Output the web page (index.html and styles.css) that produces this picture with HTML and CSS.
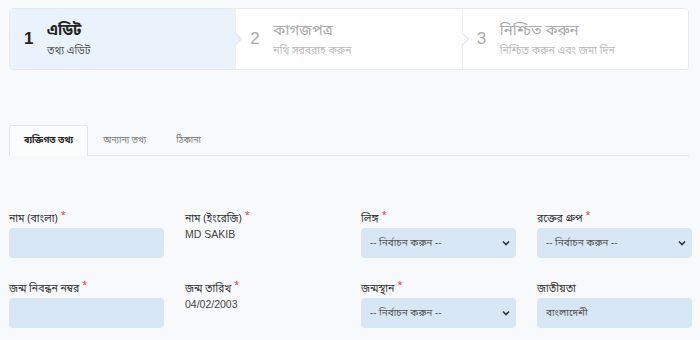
FILE: index.html
```html
<!DOCTYPE html>
<html lang="bn">
<head>
<meta charset="utf-8">
<link rel="stylesheet" href="styles.css">
</head>
<body>
<div class="steps">
  <div class="step active">
    <span class="num">1</span>
    <div class="stext"><div class="stitle">এডিট</div><div class="ssub">তথ্য এডিট</div></div>
  </div>
  <div class="step">
    <span class="num">2</span>
    <div class="stext"><div class="stitle">কাগজপত্র</div><div class="ssub">নথি সরবরাহ করুন</div></div>
  </div>
  <div class="step last">
    <span class="num">3</span>
    <div class="stext"><div class="stitle">নিশ্চিত করুন</div><div class="ssub">নিশ্চিত করুন এবং জমা দিন</div></div>
  </div>
</div>

<div class="tabs">
  <div class="tab active">ব্যক্তিগত তথ্য</div>
  <div class="tab">অন্যান্য তথ্য</div>
  <div class="tab">ঠিকানা</div>
</div>

<div class="form">
  <div class="field">
    <div class="label">নাম (বাংলা)<span class="req">*</span></div>
    <div class="input"></div>
  </div>
  <div class="field">
    <div class="label">নাম (ইংরেজি)<span class="req">*</span></div>
    <div class="plain">MD SAKIB</div>
  </div>
  <div class="field">
    <div class="label">লিঙ্গ<span class="req">*</span></div>
    <div class="input select"><span>-- নির্বাচন করুন --</span><svg width="8" height="6" viewBox="0 0 8 6"><path d="M1 1.5 L4 4.5 L7 1.5" fill="none" stroke="#333" stroke-width="1.6"/></svg></div>
  </div>
  <div class="field">
    <div class="label">রক্তের গ্রুপ<span class="req">*</span></div>
    <div class="input select"><span>-- নির্বাচন করুন --</span><svg width="8" height="6" viewBox="0 0 8 6"><path d="M1 1.5 L4 4.5 L7 1.5" fill="none" stroke="#333" stroke-width="1.6"/></svg></div>
  </div>
  <div class="field">
    <div class="label">জন্ম নিবন্ধন নম্বর<span class="req">*</span></div>
    <div class="input"></div>
  </div>
  <div class="field">
    <div class="label">জন্ম তারিখ<span class="req">*</span></div>
    <div class="plain">04/02/2003</div>
  </div>
  <div class="field">
    <div class="label">জন্মস্থান<span class="req">*</span></div>
    <div class="input select"><span>-- নির্বাচন করুন --</span><svg width="8" height="6" viewBox="0 0 8 6"><path d="M1 1.5 L4 4.5 L7 1.5" fill="none" stroke="#333" stroke-width="1.6"/></svg></div>
  </div>
  <div class="field">
    <div class="label">জাতীয়তা</div>
    <div class="input text">বাংলাদেশী</div>
  </div>
</div>
</body>
</html>
```
FILE: styles.css
```css
* { box-sizing: border-box; }
body {
  margin: 0;
  padding: 8px 11px 0 9px;
  background: #f8f9fa;
  font-family: "Noto Sans Bengali", "Noto Sans", "Liberation Sans", sans-serif;
  color: #333;
}
.steps {
  display: flex;
  height: 62px;
  border: 1px solid #e6e8eb;
  border-radius: 4px;
  background: #fff;
  overflow: hidden;
}
.step {
  flex: 1;
  display: flex;
  align-items: center;
  padding-left: 14px;
  position: relative;
  background: #fff;
}
.step.active { background: #eaf3fc; }
.step::after {
  content: "";
  position: absolute;
  right: -5px;
  top: 25px;
  width: 9px;
  height: 9px;
  background: inherit;
  border-top: 1px solid #e3e6ea;
  border-right: 1px solid #e3e6ea;
  transform: rotate(45deg);
  z-index: 2;
}
.step.last::after { display: none; }
.step + .step { border-left: 1px solid #eef0f2; }
.num {
  font-family: "Liberation Sans", sans-serif;
  font-size: 17px;
  color: #aaa;
  width: 23px;
  margin-top: 0;
}
.step.active .num { color: #222; font-weight: bold; }
.stext { line-height: 1.2; margin-top: 2px; }
.stitle { font-size: 15px; color: #aaa; }
.step.active .stitle { color: #222; font-weight: bold; }
.ssub { font-size: 10.5px; color: #bbb; margin-top: 5px; }
.step.active .ssub { color: #555; }

.tabs {
  display: flex;
  margin-top: 55px;
  height: 31px;
  border-bottom: 1px solid #e2e5e8;
}
.tab {
  padding: 0 14px;
  display: flex;
  align-items: center;
  font-size: 9px;
  color: #777;
  border: 1px solid transparent;
  border-bottom: none;
  border-radius: 3px 3px 0 0;
}
.tab.active {
  color: #222;
  font-weight: bold;
  background: #fbfcfc;
  border-color: #e2e5e8;
  margin-bottom: -1px;
}

.form {
  display: grid;
  grid-template-columns: repeat(4, 155px);
  column-gap: 21px;
  row-gap: 21px;
  margin-top: 53px;
}
.label {
  font-size: 10.5px;
  height: 19px;
  line-height: 21px;
  color: #333;
}
.req {
  color: #dc3545;
  font-size: 9px;
  vertical-align: top;
  margin-left: 3px;
  line-height: 14px;
}
.input {
  height: 30px;
  background: #d8e7f5;
  border-radius: 4px;
}
.select {
  display: flex;
  align-items: center;
  justify-content: space-between;
  padding: 0 6px 0 9px;
  font-size: 10px;
  color: #555;
}
.text {
  display: flex;
  align-items: center;
  padding: 0 9px;
  font-size: 10px;
  color: #555;
}
.plain {
  font-family: "Liberation Sans", sans-serif;
  font-size: 10.5px;
  color: #444;
  padding-top: 0;
}
```
